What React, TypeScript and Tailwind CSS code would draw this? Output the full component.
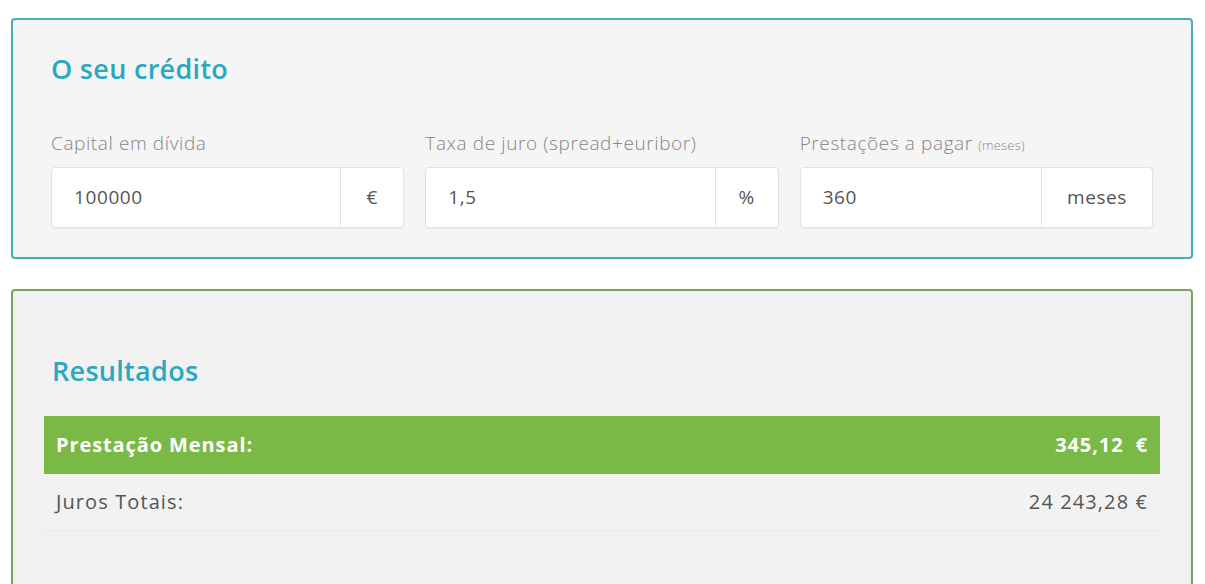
import { ReactNode } from "react";

type FieldProps = {
  label: ReactNode;
  value: string;
  unit: string;
  unitWidth: string;
};

function Field({ label, value, unit, unitWidth }: FieldProps) {
  return (
    <div className="flex flex-col">
      <label className="mb-[13px] h-[22px] text-[19px] font-light leading-[22px] tracking-[0.6px] text-[#858585]">
        {label}
      </label>
      <div className="flex h-[61px] rounded-[4px] border border-[#e2e2e2] bg-white shadow-[0_1px_2px_rgba(0,0,0,0.06)]">
        <div className="flex flex-1 items-center pl-[22px] text-[19px] tracking-[0.6px] text-[#555]">
          {value}
        </div>
        <div
          className={`flex items-center justify-center border-l border-[#e2e2e2] text-[19px] tracking-[0.6px] text-[#555] ${unitWidth}`}
        >
          {unit}
        </div>
      </div>
    </div>
  );
}

export default function App() {
  return (
    <div
      className="h-[584px] overflow-hidden bg-white pl-[11px] pr-[12px] pt-[18px]"
      style={{ fontFamily: "'Open Sans', Lato, sans-serif" }}
    >
      <section className="rounded-[4px] border-2 border-[#46adbb] bg-[#f5f5f5] px-[38px] pb-[29px] pt-[33px]">
        <h2 className="text-[27px] font-semibold leading-[32px] tracking-[0.3px] text-[#29a8bf]">
          O seu crédito
        </h2>
        <div className="mt-[47px] grid grid-cols-3 gap-[21px]">
          <Field label="Capital em dívida" value="100000" unit="€" unitWidth="w-[63px]" />
          <Field
            label="Taxa de juro (spread+euribor)"
            value="1,5"
            unit="%"
            unitWidth="w-[63px]"
          />
          <Field
            label={
              <>
                Prestações a pagar{" "}
                <span className="text-[13px] tracking-[0.2px]">(meses)</span>
              </>
            }
            value="360"
            unit="meses"
            unitWidth="w-[111px]"
          />
        </div>
      </section>

      <section className="mt-[30px] h-[320px] rounded-[4px] border-2 border-[#77a35a] bg-[#f1f1f1] px-[31px] pt-[64px]">
        <h2 className="pl-[8px] text-[27px] font-semibold leading-[32px] tracking-[0.3px] text-[#29a8bf]">
          Resultados
        </h2>
        <div className="mt-[29px]">
          <div className="flex h-[58px] items-center justify-between bg-[#7ab946] px-[12px] text-[20px] font-bold tracking-[0.9px] text-white">
            <span>Prestação Mensal:</span>
            <span>345,12&nbsp; €</span>
          </div>
          <div className="flex h-[57px] items-center justify-between border-b border-[#e8e8e8] bg-[#f2f2f2] px-[12px] text-[20px] tracking-[1.1px] text-[#555]">
            <span>Juros Totais:</span>
            <span>24 243,28 €</span>
          </div>
        </div>
      </section>
    </div>
  );
}
